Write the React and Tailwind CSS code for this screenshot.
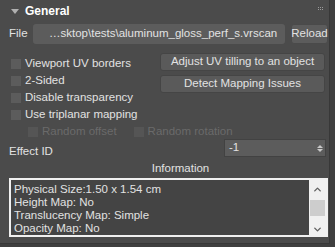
import { ChevronUp, ChevronDown } from 'lucide-react';

const Check = ({ label, disabled }) => (
  <div className={`flex items-center gap-[4px] h-[17px] whitespace-nowrap ${disabled ? 'text-[#6a6a6a]' : 'text-[#e2e2e2]'}`}>
    <div className={`w-[10px] h-[10px] shrink-0 ${disabled ? 'bg-[#555555]' : 'bg-[#5c5c5c]'}`} />
    <span>{label}</span>
  </div>
);

export default function App() {
  return (
    <div className="w-[335px] h-[247px] bg-[#3f3f3f] overflow-hidden text-[11.5px] leading-none whitespace-nowrap" style={{ fontFamily: '"Liberation Sans", Arial, sans-serif' }}>
      <div className="relative w-[330px] h-[244px] bg-[#4b4b4b] border-r border-b border-[#383838] pl-[9px] pr-[1px] pt-[3px]">
        <div className="flex items-center h-[16px] gap-[6px] pl-[2px]">
          <div className="w-0 h-0 border-l-[4px] border-r-[4px] border-t-[5px] border-l-transparent border-r-transparent border-t-[#b0b0b0]" />
          <span className="font-bold text-white text-[12px]">General</span>
        </div>
        <div className="absolute right-[6px] top-[7px] grid grid-cols-3 gap-[1px]">
          {[...Array(6)].map((_, i) => <div key={i} className="w-[1px] h-[1px] bg-[#9a9a9a]" />)}
        </div>

        <div className="flex items-center mt-[5px] h-[20px] text-[#e2e2e2]">
          <span className="w-[24px]">File</span>
          <div className="flex-1 h-[20px] rounded-[3px] bg-[#5c5c5c] flex items-center pl-[16px] overflow-hidden">…sktop\tests\aluminum_gloss_perf_s.vrscan</div>
          <div className="ml-[6px] w-[37px] h-[20px] rounded-[3px] bg-[#5c5c5c] border border-[#4a4a4a] flex items-center justify-center">Reload</div>
        </div>

        <div className="flex mt-[11px]">
          <div className="w-[151px] pl-[2px]">
            <Check label="Viewport UV borders" />
            <Check label="2-Sided" />
            <Check label="Disable transparency" />
            <Check label="Use triplanar mapping" />
            <div className="flex pl-[17px] gap-[17px]">
              <Check label="Random offset" disabled />
              <Check label="Random rotation" disabled />
            </div>
          </div>
          <div className="flex-1 flex flex-col gap-[4px] pr-[3px] -mt-[2px]">
            <div className="h-[18px] rounded-[3px] bg-[#5a5a5a] border border-[#454545] flex items-center justify-center text-[#e2e2e2]">Adjust UV tilling to an object</div>
            <div className="h-[18px] rounded-[3px] bg-[#5a5a5a] border border-[#454545] flex items-center justify-center text-[#e2e2e2]">Detect Mapping Issues</div>
          </div>
        </div>

        <div className="flex items-start justify-between -mt-[1px] h-[20px] text-[#e2e2e2] pr-[2px]">
          <span className="mt-[7px]">Effect ID</span>
          <div className="w-[102px] h-[18px] bg-[#5c5c5c] border border-[#424242] flex items-center justify-between pl-[4px] pr-[2px]">
            <span>-1</span>
            <div className="flex flex-col gap-[1px]">
              <div className="w-0 h-0 border-l-[3px] border-r-[3px] border-b-[3px] border-l-transparent border-r-transparent border-b-[#c8c8c8]" />
              <div className="w-0 h-0 border-l-[3px] border-r-[3px] border-t-[3px] border-l-transparent border-r-transparent border-t-[#c8c8c8]" />
            </div>
          </div>
        </div>

        <div className="text-center text-[#e2e2e2] mt-[4px] pl-[24px]">Information</div>

        <div className="mt-[3px] h-[59px] border-2 border-[#f0f0f0] bg-[#444444] flex">
          <div className="flex-1 pl-[3px] pt-[3px] text-[#e2e2e2] leading-[13px]">
            <div>Physical Size:1.50 x 1.54 cm</div>
            <div>Height Map: No</div>
            <div>Translucency Map: Simple</div>
            <div>Opacity Map: No</div>
          </div>
          <div className="w-[17px] bg-[#f0f0f0] flex flex-col items-center text-[#606060]">
            <ChevronUp size={11} strokeWidth={3} className="mt-[4px]" />
            <div className="w-[15px] h-[16px] bg-[#cdcdcd] mt-[5px]" />
            <ChevronDown size={11} strokeWidth={3} className="mt-[8px]" />
          </div>
        </div>
      </div>
    </div>
  );
}
